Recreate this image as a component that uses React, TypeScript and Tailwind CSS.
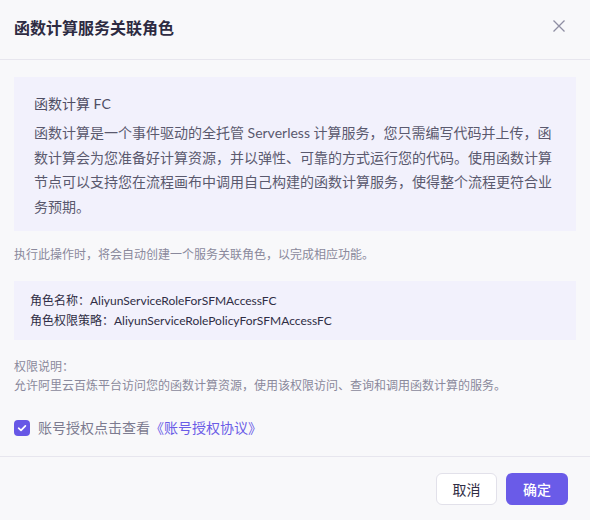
export default function App() {
  return (
    <div
      className="flex h-[520px] w-[590px] flex-col bg-[#f8f8fa] text-[#2f2d44]"
      style={{ fontFamily: 'Lato, "Noto Sans CJK SC", "Noto Sans", sans-serif' }}
    >
      <header className="flex h-[60px] shrink-0 items-center justify-between border-b border-[#e7e6ee] pl-[14px] pr-[24px] pb-[4px]">
        <h1 className="text-[16px] font-bold leading-[24px] text-[#2d2b42]">函数计算服务关联角色</h1>
        <svg width="14" height="14" viewBox="0 0 14 14" className="mt-[-3px] text-[#8f8ea3]">
          <path d="M1.5 1.5L12.5 12.5M12.5 1.5L1.5 12.5" stroke="currentColor" strokeWidth="1.3" fill="none" />
        </svg>
      </header>

      <main className="flex-1 px-[14px] pt-[17px]">
        <section className="bg-[#f2f1fc] px-[20px] pb-[12px] pt-[17px]">
          <h2 className="text-[14px] leading-[20px] text-[#4f4e64]">函数计算 FC</h2>
          <p className="mt-[7px] text-[14px] leading-[24.5px] text-[#5a596e]">
            函数计算是一个事件驱动的全托管 Serverless 计算服务，您只需编写代码并上传，函数计算会为您准备好计算资源，并以弹性、可靠的方式运行您的代码。使用函数计算节点可以支持您在流程画布中调用自己构建的函数计算服务，使得整个流程更符合业务预期。
          </p>
        </section>

        <p className="mt-[14px] text-[12px] leading-[20px] text-[#8a899c]">
          执行此操作时，将会自动创建一个服务关联角色，以完成相应功能。
        </p>

        <section className="mt-[16px] bg-[#f2f1fc] px-[16px] pb-[9px] pt-[10px] text-[12px] leading-[20px] text-[#2f2d44]">
          <p>角色名称：AliyunServiceRoleForSFMAccessFC</p>
          <p>角色权限策略：AliyunServiceRolePolicyForSFMAccessFC</p>
        </section>

        <div className="mt-[17px] text-[12px] leading-[19px] text-[#8a899c]">
          <p>权限说明：</p>
          <p>允许阿里云百炼平台访问您的函数计算资源，使用该权限访问、查询和调用函数计算的服务。</p>
        </div>

        <label className="mt-[23px] flex items-center gap-[8px] text-[14px] leading-[20px]">
          <span className="flex h-[16px] w-[16px] items-center justify-center rounded-[4px] bg-[#6757e6]">
            <svg width="10" height="10" viewBox="0 0 10 10">
              <path d="M1.6 5.2L4 7.4L8.4 2.8" stroke="#fff" strokeWidth="1.7" fill="none" strokeLinecap="round" strokeLinejoin="round" />
            </svg>
          </span>
          <span className="text-[#7c7b90]">
            账号授权点击查看<span className="text-[#6b5ce7]">《账号授权协议》</span>
          </span>
        </label>
      </main>

      <footer className="flex h-[64px] shrink-0 items-start justify-end gap-[9px] border-t border-[#e7e6ee] pr-[22px] pt-[16px]">
        <button className="h-[32px] w-[61px] rounded-[6px] border border-[#e2e1ea] bg-white text-[14px] text-[#2f2d44]">
          取消
        </button>
        <button className="h-[32px] w-[62px] rounded-[6px] bg-[#6a5be8] text-[14px] font-medium text-white">
          确定
        </button>
      </footer>
    </div>
  );
}
